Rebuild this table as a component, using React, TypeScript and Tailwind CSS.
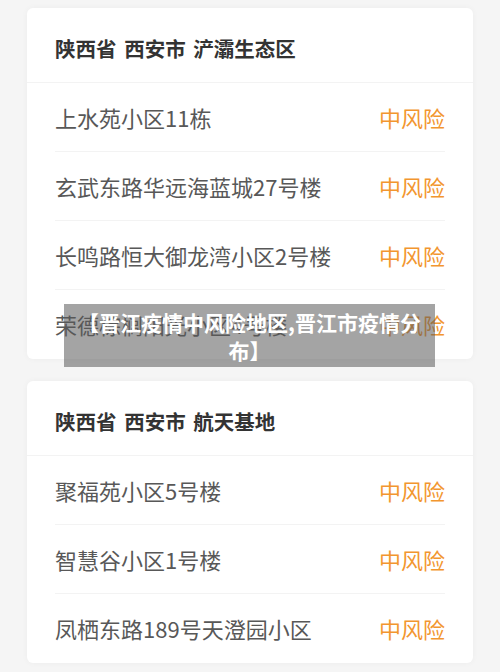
import React from 'react';

type Area = {
  title: string;
  rows: string[];
};

const areas: Area[] = [
  {
    title: '陕西省 西安市 浐灞生态区',
    rows: ['上水苑小区11栋', '玄武东路华远海蓝城27号楼', '长鸣路恒大御龙湾小区2号楼', '荣德棕榈阳光小区4号楼'],
  },
  {
    title: '陕西省 西安市 航天基地',
    rows: ['聚福苑小区5号楼', '智慧谷小区1号楼', '凤栖东路189号天澄园小区'],
  },
];

const font = { fontFamily: '"Noto Sans CJK SC", "Noto Sans", sans-serif' };

function AreaCard({ area }: { area: Area }) {
  return (
    <div className="bg-white rounded-md shadow-[0_0_6px_rgba(0,0,0,0.04)]">
      {/* Header */}
      <div className="h-[75px] flex items-center pt-[7px] px-[28px] border-b border-[#f3f3f3]">
        <h3 className="text-[20.5px] font-bold text-[#333] [word-spacing:3px]">{area.title}</h3>
      </div>

      {/* Rows */}
      <div className="px-[28px]">
        {area.rows.map((row, i) => (
          <div
            key={row}
            className={
              i < area.rows.length - 1
                ? 'h-[69px] flex items-center justify-between border-b border-[#f3f3f3]'
                : 'h-[69px] flex items-center justify-between'
            }
          >
            <span className="text-[22px] text-[#585858]">{row}</span>
            <span className="text-[22px] text-[#f2962f]">中风险</span>
          </div>
        ))}
      </div>
    </div>
  );
}

export default function App() {
  return (
    <div className="relative w-[500px] h-[672px] overflow-hidden bg-[#f5f5f5]" style={font}>
      <div className="flex flex-col gap-[22px] px-[27px] pt-[8px]">
        {areas.map((area) => (
          <AreaCard key={area.title} area={area} />
        ))}
      </div>

      {/* Caption overlay */}
      <div className="absolute left-[64px] top-[304px] w-[371px] h-[63px] bg-[rgba(90,90,90,0.55)] px-[12px] flex items-center justify-center">
        <p className="text-center text-white font-bold text-[21px] leading-[28px]">
          【晋江疫情中风险地区,晋江市疫情分布】
        </p>
      </div>
    </div>
  );
}
